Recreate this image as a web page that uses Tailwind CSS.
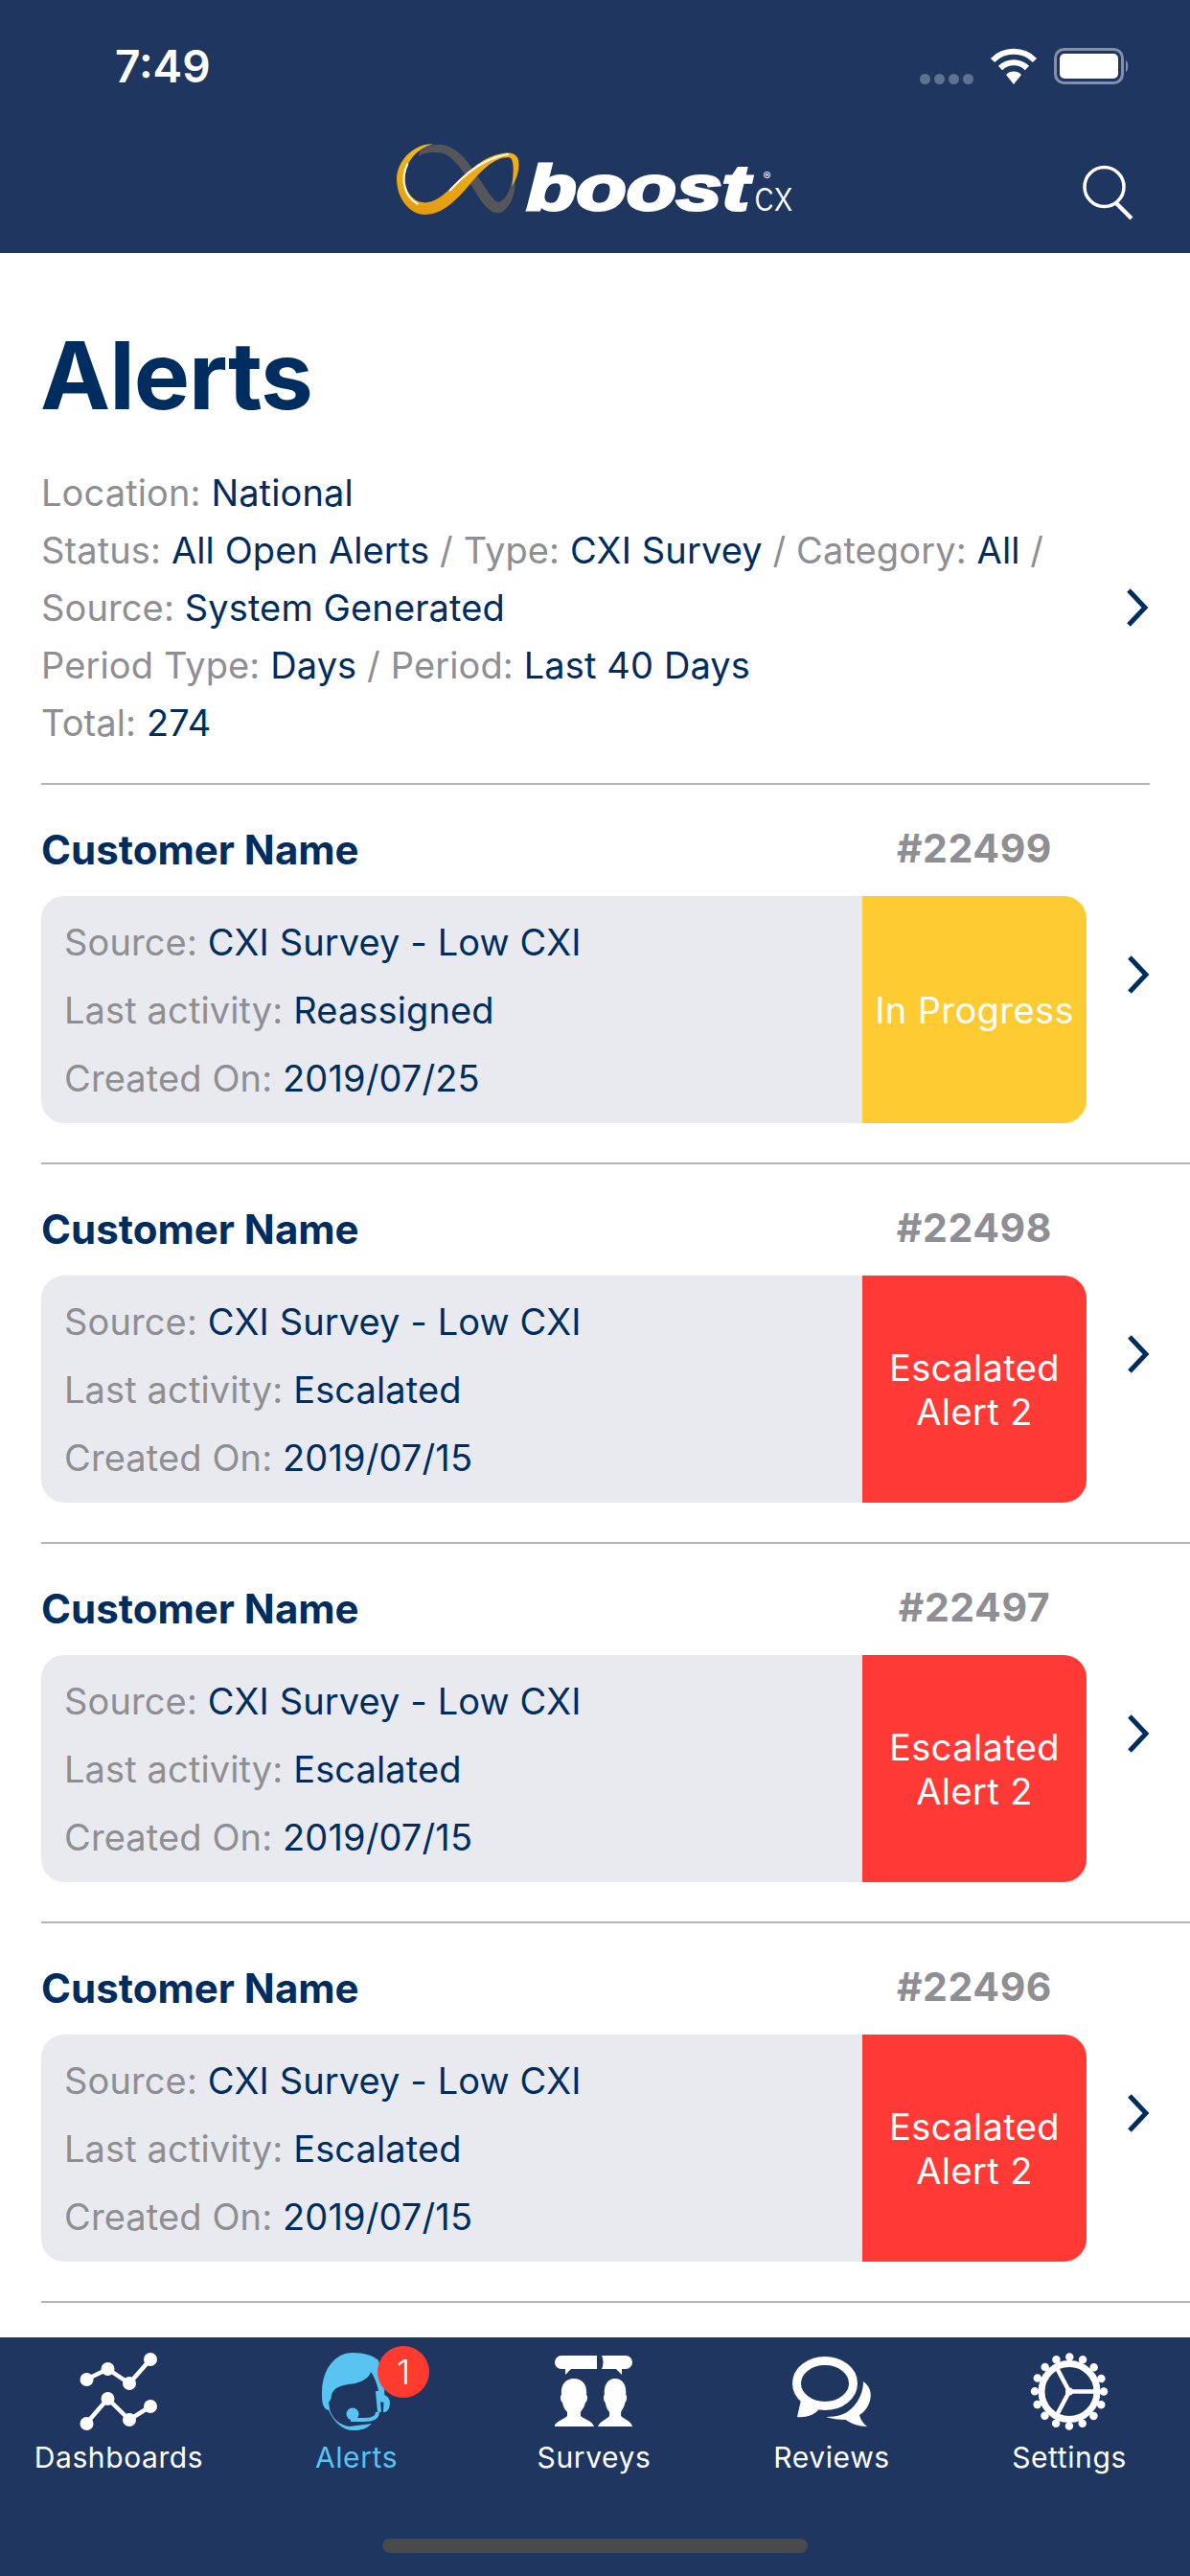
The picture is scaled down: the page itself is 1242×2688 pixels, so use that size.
<!DOCTYPE html>
<html>
<head>
<meta charset="utf-8">
<script src="https://cdn.jsdelivr.net/npm/@tailwindcss/browser@4"></script>
</head>
<body class="m-0">
<div class="w-[1242px] h-[2688px] flex flex-col bg-white overflow-hidden font-['Inter',sans-serif]">

  <header class="h-[264px] shrink-0 bg-[#1e3660] flex flex-col">
    <div class="h-[148px] flex items-start">
      <div class="ml-[120px] mt-[42px] text-[46px] leading-[54px] font-semibold text-white">7:49</div>
      <div class="ml-auto mt-[50px] mr-[62px] flex items-start">
        <div class="flex gap-[4px] mt-[27px]">
          <span class="w-[11px] h-[11px] rounded-full bg-white/30"></span>
          <span class="w-[11px] h-[11px] rounded-full bg-white/30"></span>
          <span class="w-[11px] h-[11px] rounded-full bg-white/30"></span>
          <span class="w-[11px] h-[11px] rounded-full bg-white/30"></span>
        </div>
        <svg class="ml-[17px]" width="50" height="38" viewBox="0 0 50 38" fill="none">
          <path d="M3 13 A31 31 0 0 1 47 13" stroke="#fff" stroke-width="6"/>
          <path d="M11 21 A20 20 0 0 1 39 21" stroke="#fff" stroke-width="6"/>
          <path d="M25 38 L17 28 A11 11 0 0 1 33 28Z" fill="#fff"/>
        </svg>
        <svg class="ml-[17px]" width="80" height="38" viewBox="0 0 80 38" fill="none">
          <rect x="1.5" y="1.5" width="70" height="35" rx="9" stroke="#fff" stroke-opacity=".45" stroke-width="3"/>
          <rect x="6" y="6" width="61" height="26" rx="5" fill="#fff"/>
          <path d="M75 13 C78 14 78 24 75 25Z" fill="#fff" fill-opacity=".45"/>
        </svg>
      </div>
    </div>
    <div class="grid grid-cols-[1fr_auto_1fr] items-start">
      <div></div>
      <svg width="417" height="78" viewBox="100 55 1250 235">
        <defs>
          <linearGradient id="gold" x1="0" y1="0" x2="0" y2="1">
            <stop offset="0" stop-color="#f3b51c"/>
            <stop offset="1" stop-color="#e49c10"/>
          </linearGradient>
        </defs>
        <path d="M170 90 C190 62 240 55 275 75 C320 100 350 160 380 200 C395 225 410 245 420 245 C440 240 460 210 470 140 C478 190 470 260 425 278 C395 285 370 250 340 200 C310 150 280 100 240 90 C210 85 185 90 170 100Z" fill="#55565b"/>
        <path d="M215 62 C150 60 98 120 100 175 C102 240 145 285 190 284 C260 282 310 210 350 165 C390 120 430 100 455 105 C470 110 468 150 462 195 C480 170 490 130 480 105 C470 85 440 85 400 100 C350 120 300 170 265 205 C235 235 205 250 180 245 C150 240 125 210 125 170 C125 120 165 75 215 62Z" fill="url(#gold)"/>
        <path d="M134 125 C112 170 122 225 165 250" fill="none" stroke="#fff" stroke-width="6" stroke-linecap="round"/>
        <path d="M268 207 C320 150 380 105 450 94" fill="none" stroke="#fff" stroke-width="6" stroke-linecap="round"/>
        <text x="508" y="270" font-size="200" font-weight="700" font-style="italic" font-family="Liberation Sans" fill="#fff" stroke="#fff" stroke-width="9" textLength="700" lengthAdjust="spacingAndGlyphs">boost</text>
        <text x="1224" y="272" font-size="130" font-weight="300" font-family="Inter" fill="#fff" textLength="122" lengthAdjust="spacingAndGlyphs">cx</text>
        <text x="1252" y="176" font-size="36" font-family="Inter" fill="#fff">®</text>
      </svg>
      <svg class="justify-self-end mr-[58px] mt-[24px]" width="54" height="58" viewBox="0 0 54 58" fill="none" stroke="#fff">
        <circle cx="22.5" cy="23" r="20.5" stroke-width="3.5"/>
        <path d="M35 40 L51 56" stroke-width="4.5"/>
      </svg>
    </div>
  </header>

  <main class="flex-1 min-h-0 overflow-hidden text-[38px] leading-[60px] tracking-[0.12px] text-[#8e8e93]">
    <section class="ml-[43px] mr-[42px] border-b-2 border-[#b4b4b6] h-[555px] pt-[80px]">
      <h1 class="text-[98px] leading-[96px] font-bold text-[#002d5f] tracking-[-1px] -ml-[1px]">Alerts</h1>
      <div class="mt-[44px] flex items-center">
        <div class="flex-1">
          <div>Location: <span class="text-[#002d5f]">National</span></div>
          <div>Status: <span class="text-[#002d5f]">All Open Alerts</span> / Type: <span class="text-[#002d5f]">CXI Survey</span> / Category: <span class="text-[#002d5f]">All</span> /</div>
          <div>Source: <span class="text-[#002d5f]">System Generated</span></div>
          <div>Period Type: <span class="text-[#002d5f]">Days</span> / Period: <span class="text-[#002d5f]">Last 40 Days</span></div>
          <div>Total: <span class="text-[#002d5f]">274</span></div>
        </div>
        <svg width="26" height="40" viewBox="0 0 26 40" fill="none" stroke="#002d5f" stroke-width="5"><path d="M4 2 L21 20 L4 38"/></svg>
      </div>
    </section>

    <article class="ml-[43px] border-b-2 border-[#b4b4b6] h-[396px] pt-[44px]">
      <div class="flex items-center h-[48px] w-[1091px]">
        <div class="flex-1 text-[42px] leading-[48px] font-bold text-[#002d5f] tracking-normal">Customer Name</div>
        <div class="w-[234px] text-center text-[41px] leading-[48px] font-bold text-[#8e8e93] tracking-[0.6px] mb-[4px]">#22499</div>
      </div>
      <div class="mt-[24px] flex items-start">
        <div class="w-[1091px] h-[237px] rounded-[24px] overflow-hidden bg-[#e9eaef] flex">
          <div class="flex-1 pl-[24px] flex flex-col justify-center gap-[11px]">
            <div>Source: <span class="text-[#002d5f]">CXI Survey - Low CXI</span></div>
            <div>Last activity: <span class="text-[#002d5f]">Reassigned</span></div>
            <div>Created On: <span class="text-[#002d5f]">2019/07/25</span></div>
          </div>
          <div class="w-[234px] bg-[#ffcb33] text-white text-center flex items-center justify-center leading-[46px] tracking-[0.4px]">In Progress</div>
        </div>
        <svg class="ml-[41px] mt-[62px]" width="26" height="40" viewBox="0 0 26 40" fill="none" stroke="#002d5f" stroke-width="5"><path d="M4 2 L21 20 L4 38"/></svg>
      </div>
    </article>

    <article class="ml-[43px] border-b-2 border-[#b4b4b6] h-[396px] pt-[44px]">
      <div class="flex items-center h-[48px] w-[1091px]">
        <div class="flex-1 text-[42px] leading-[48px] font-bold text-[#002d5f] tracking-normal">Customer Name</div>
        <div class="w-[234px] text-center text-[41px] leading-[48px] font-bold text-[#8e8e93] tracking-[0.6px] mb-[4px]">#22498</div>
      </div>
      <div class="mt-[24px] flex items-start">
        <div class="w-[1091px] h-[237px] rounded-[24px] overflow-hidden bg-[#e9eaef] flex">
          <div class="flex-1 pl-[24px] flex flex-col justify-center gap-[11px]">
            <div>Source: <span class="text-[#002d5f]">CXI Survey - Low CXI</span></div>
            <div>Last activity: <span class="text-[#002d5f]">Escalated</span></div>
            <div>Created On: <span class="text-[#002d5f]">2019/07/15</span></div>
          </div>
          <div class="w-[234px] bg-[#ff3a36] text-white text-center flex items-center justify-center leading-[46px] tracking-[0.4px]">Escalated<br>Alert 2</div>
        </div>
        <svg class="ml-[41px] mt-[62px]" width="26" height="40" viewBox="0 0 26 40" fill="none" stroke="#002d5f" stroke-width="5"><path d="M4 2 L21 20 L4 38"/></svg>
      </div>
    </article>

    <article class="ml-[43px] border-b-2 border-[#b4b4b6] h-[396px] pt-[44px]">
      <div class="flex items-center h-[48px] w-[1091px]">
        <div class="flex-1 text-[42px] leading-[48px] font-bold text-[#002d5f] tracking-normal">Customer Name</div>
        <div class="w-[234px] text-center text-[41px] leading-[48px] font-bold text-[#8e8e93] tracking-[0.6px] mb-[4px]">#22497</div>
      </div>
      <div class="mt-[24px] flex items-start">
        <div class="w-[1091px] h-[237px] rounded-[24px] overflow-hidden bg-[#e9eaef] flex">
          <div class="flex-1 pl-[24px] flex flex-col justify-center gap-[11px]">
            <div>Source: <span class="text-[#002d5f]">CXI Survey - Low CXI</span></div>
            <div>Last activity: <span class="text-[#002d5f]">Escalated</span></div>
            <div>Created On: <span class="text-[#002d5f]">2019/07/15</span></div>
          </div>
          <div class="w-[234px] bg-[#ff3a36] text-white text-center flex items-center justify-center leading-[46px] tracking-[0.4px]">Escalated<br>Alert 2</div>
        </div>
        <svg class="ml-[41px] mt-[62px]" width="26" height="40" viewBox="0 0 26 40" fill="none" stroke="#002d5f" stroke-width="5"><path d="M4 2 L21 20 L4 38"/></svg>
      </div>
    </article>

    <article class="ml-[43px] border-b-2 border-[#b4b4b6] h-[396px] pt-[44px]">
      <div class="flex items-center h-[48px] w-[1091px]">
        <div class="flex-1 text-[42px] leading-[48px] font-bold text-[#002d5f] tracking-normal">Customer Name</div>
        <div class="w-[234px] text-center text-[41px] leading-[48px] font-bold text-[#8e8e93] tracking-[0.6px] mb-[4px]">#22496</div>
      </div>
      <div class="mt-[24px] flex items-start">
        <div class="w-[1091px] h-[237px] rounded-[24px] overflow-hidden bg-[#e9eaef] flex">
          <div class="flex-1 pl-[24px] flex flex-col justify-center gap-[11px]">
            <div>Source: <span class="text-[#002d5f]">CXI Survey - Low CXI</span></div>
            <div>Last activity: <span class="text-[#002d5f]">Escalated</span></div>
            <div>Created On: <span class="text-[#002d5f]">2019/07/15</span></div>
          </div>
          <div class="w-[234px] bg-[#ff3a36] text-white text-center flex items-center justify-center leading-[46px] tracking-[0.4px]">Escalated<br>Alert 2</div>
        </div>
        <svg class="ml-[41px] mt-[62px]" width="26" height="40" viewBox="0 0 26 40" fill="none" stroke="#002d5f" stroke-width="5"><path d="M4 2 L21 20 L4 38"/></svg>
      </div>
    </article>
  </main>

  <nav class="h-[249px] shrink-0 bg-[#1e3660] flex flex-col">
    <div class="grid grid-cols-[repeat(5,248px)] pt-[16px] text-[30px] leading-[36px] tracking-[0.6px] text-white">
      <div class="flex flex-col items-center">
        <svg width="82" height="81" viewBox="0 0 82 81" fill="#fff" stroke="#fff">
          <path d="M7 28 L29.5 17 L52 32 L74 7" fill="none" stroke-width="4.5"/>
          <path d="M7 74 L29.5 48 L52 70 L74 56" fill="none" stroke-width="4.5"/>
          <circle cx="7.5" cy="28" r="7" stroke="none"/><circle cx="29.5" cy="17" r="7" stroke="none"/><circle cx="52" cy="32" r="7" stroke="none"/><circle cx="74" cy="7" r="7" stroke="none"/>
          <circle cx="7.5" cy="74" r="7" stroke="none"/><circle cx="29.5" cy="48" r="7" stroke="none"/><circle cx="52" cy="70" r="7" stroke="none"/><circle cx="74" cy="56" r="7" stroke="none"/>
        </svg>
        <div class="mt-[10px]">Dashboards</div>
      </div>
      <div class="flex flex-col items-center text-[#59c3f2]">
        <div class="relative w-[72px] h-[81px]">
          <svg width="72" height="82" viewBox="0 0 72 82" fill="#59c3f2">
            <path d="M0 45 C-1 20 12 0 32 0 C44 0 54 3 59 8 L62 20 C65 30 66 40 65 52 L60 51 C60 38 56 27 51 20 C49 28 38 32 28 33 C16 35 10 38 9.5 48 L7 52 C8 56 8 58 8 59 C11 70 20 76 29 77 L52 74 C47 79 41 81 35 81 C22 82 12 72 7 60 C2 59 0 54 0 45Z"/>
            <path d="M65 44 C71 46 72 52 70 58 C68 62 66 62 64 62Z"/>
            <path d="M58 62 C58 68 52 70 44 70 L30 70" fill="none" stroke="#59c3f2" stroke-width="4"/>
            <path d="M58 40 L60 62" fill="none" stroke="#59c3f2" stroke-width="4"/>
            <circle cx="32" cy="64" r="6.5"/>
          </svg>
          <div class="absolute left-[58px] top-[-7px] w-[54px] h-[54px] rounded-full bg-[#ff3b30] text-white text-[36px] leading-[54px] text-center font-light tracking-normal">1</div>
        </div>
        <div class="mt-[10px]">Alerts</div>
      </div>
      <div class="flex flex-col items-center">
        <svg width="82" height="81" viewBox="0 0 82 81" fill="#fff">
          <path d="M7 3 H44 V17 H17 L11 23 V17 H7 A7 7 0 0 1 7 3Z"/>
          <path d="M49 3 H74 A7 7 0 0 1 74 17 H70 V23 L64 17 H49 C51 13 51 7 49 3Z"/>
          <g transform="translate(-1 27)"><path d="M21 0 C31 0 35 8 34 17 C36 18 35 24 33 25 C32 30 29 33 28 35 L28 39 C33 43 40 44 42 50 L0 50 C3 44 10 43 14 39 L14 35 C12 33 10 30 9 25 C7 24 6 18 8 17 C7 8 11 0 21 0Z"/></g>
          <g transform="translate(45 27) scale(.86 1)"><path d="M21 0 C31 0 35 8 34 17 C36 18 35 24 33 25 C32 30 29 33 28 35 L28 39 C33 43 40 44 42 50 L0 50 C3 44 10 43 14 39 L14 35 C12 33 10 30 9 25 C7 24 6 18 8 17 C7 8 11 0 21 0Z"/></g>
        </svg>
        <div class="mt-[10px]">Surveys</div>
      </div>
      <div class="flex flex-col items-center">
        <svg width="82" height="81" viewBox="0 0 82 81" fill="#fff">
          <ellipse cx="34" cy="32" rx="29.5" ry="23.5" fill="none" stroke="#fff" stroke-width="9"/>
          <path d="M10 45 L5 67 C14 68 22 65 27 60 L23 50Z"/>
          <path d="M74 30 C81 35 83 42 81 50 C79 57 75 62 70 65 C71 70 74 74 78 77 C69 77 61 74 56 70 C48 70 41 69 35 67 C48 67 56 64 62 58 C70 50 74 40 74 30Z"/>
        </svg>
        <div class="mt-[10px]">Reviews</div>
      </div>
      <div class="flex flex-col items-center">
        <svg width="82" height="81" viewBox="0 0 82 81" fill="none" stroke="#fff">
          <circle cx="41" cy="40.5" r="36" stroke-width="8.5" stroke-linecap="round" stroke-dasharray="0 14.137"/>
          <circle cx="41" cy="40.5" r="29" stroke-width="7"/>
          <path d="M41 40.5 H70 M41 40.5 L27 14 M41 40.5 L27 67" stroke-width="4.5"/>
          <circle cx="41" cy="40.5" r="4" fill="#fff" stroke="none"/>
        </svg>
        <div class="mt-[10px]">Settings</div>
      </div>
    </div>
    <div class="mt-[67px] mx-auto w-[444px] h-[15px] rounded-full bg-[#4a4a4a]"></div>
  </nav>
</div>
</body>
</html>
